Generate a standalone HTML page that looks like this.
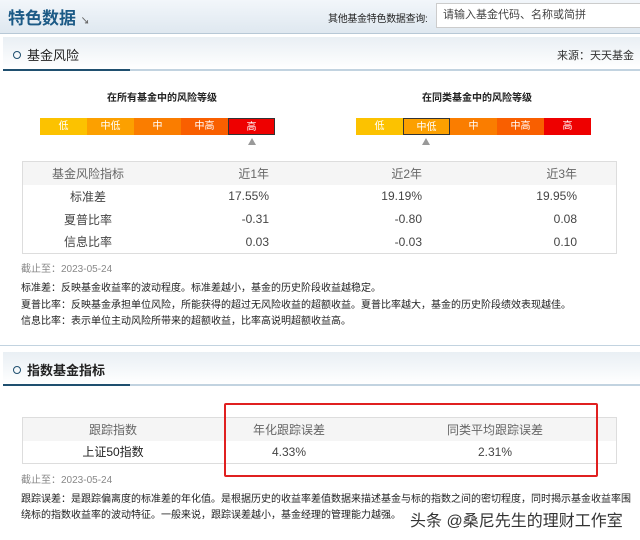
<html><head><style>
body{margin:0;width:640px;height:540px;background:#fff;font-family:"Liberation Sans","Noto Sans CJK SC",sans-serif;position:relative;overflow:hidden;color:#333}
.a{position:absolute;white-space:nowrap}
.bar{position:absolute;height:17px;display:flex}
.bar div{width:47px;text-align:center;font-size:10px;line-height:17px;color:#fff;box-sizing:border-box}
.tri{position:absolute;width:0;height:0;border-left:4px solid transparent;border-right:4px solid transparent;border-bottom:7px solid #999}
.sec{position:absolute;left:3px;right:0;height:32px;background:linear-gradient(#e9eff4,#fff);border-bottom:2px solid #c2d3e0}
.sec .u{position:absolute;left:0;bottom:-2px;width:127px;height:2px;background:#1f4f6f}
.sec .t{position:absolute;left:10px;top:8px;font-size:13px;color:#222}
.sec .t:before{content:"";display:inline-block;width:6px;height:6px;border:1.5px solid #1f4f6f;border-radius:50%;margin-right:6px;vertical-align:1px}
table{position:absolute;border-collapse:collapse;border:1px solid #ddd;font-size:12px;color:#444}
td{height:23px;padding:0}
.n{font-size:10px;color:#222}
</style></head><body>
<div class="a" style="left:0;top:0;width:640px;height:33px;background:linear-gradient(#f2f6fa,#dfe8f0);border-bottom:1px solid #b7c8d6"></div>
<div class="a" style="left:8px;top:4px;font-size:17px;font-weight:bold;color:#1c5a86">特色数据 <span style="font-size:9px;color:#666">↘</span></div>
<div class="a" style="left:328px;top:10px;font-size:10px;color:#222;letter-spacing:-0.3px">其他基金特色数据查询:</div>
<div class="a" style="left:436px;top:3px;width:210px;height:25px;background:#fff;border:1px solid #ccc;box-sizing:border-box;font-size:11px;line-height:23px;padding-left:6px;color:#444">请输入基金代码、名称或简拼</div>
<div class="sec" style="top:37px"><div class="u"></div><div class="t">基金风险</div><div class="a" style="right:6px;top:10px;font-size:11px;color:#333">来源：天天基金</div></div>
<div class="a" style="left:107px;top:89px;font-size:10px;font-weight:bold;color:#222">在所有基金中的风险等级</div>
<div class="a" style="left:422px;top:89px;font-size:10px;font-weight:bold;color:#222">在同类基金中的风险等级</div>
<div class="bar" style="left:40px;top:118px"><div style="background:#fcc200">低</div><div style="background:#fca000">中低</div><div style="background:#fa7d00">中</div><div style="background:#f95f00">中高</div><div style="background:#ee0000;border:1px solid #333">高</div></div>
<div class="bar" style="left:356px;top:118px"><div style="background:#fcc200">低</div><div style="background:#fca000;border:1px solid #333">中低</div><div style="background:#fa7d00">中</div><div style="background:#f95f00">中高</div><div style="background:#ee0000">高</div></div>
<div class="tri" style="left:248px;top:138px"></div>
<div class="tri" style="left:422px;top:138px"></div>
<table style="left:22px;top:161px;width:595px">
<tr style="background:#f5f5f5;color:#666"><td style="width:130px;text-align:center">基金风险指标</td><td style="text-align:right;width:116px">近1年</td><td style="text-align:right;width:153px">近2年</td><td style="text-align:right;width:155px">近3年</td><td></td></tr>
<tr><td style="text-align:center">标准差</td><td style="text-align:right">17.55%</td><td style="text-align:right">19.19%</td><td style="text-align:right">19.95%</td><td></td></tr>
<tr><td style="text-align:center">夏普比率</td><td style="text-align:right">-0.31</td><td style="text-align:right">-0.80</td><td style="text-align:right">0.08</td><td></td></tr>
<tr><td style="text-align:center">信息比率</td><td style="text-align:right">0.03</td><td style="text-align:right">-0.03</td><td style="text-align:right">0.10</td><td></td></tr>
</table>
<div class="a" style="left:21px;top:260px;font-size:10px;color:#888">截止至：2023-05-24</div>
<div class="a n" style="left:21px;top:279px">标准差：反映基金收益率的波动程度。标准差越小，基金的历史阶段收益越稳定。</div>
<div class="a n" style="left:21px;top:296px">夏普比率：反映基金承担单位风险，所能获得的超过无风险收益的超额收益。夏普比率越大，基金的历史阶段绩效表现越佳。</div>
<div class="a n" style="left:21px;top:312px">信息比率：表示单位主动风险所带来的超额收益，比率高说明超额收益高。</div>
<div class="a" style="left:0;top:345px;width:640px;height:1px;background:#c2d3e0"></div>
<div class="sec" style="top:352px"><div class="u"></div><div class="t" style="font-weight:bold">指数基金指标</div></div>
<table style="left:22px;top:417px;width:595px">
<tr style="background:#f5f5f5;color:#666"><td style="width:180px;text-align:center">跟踪指数</td><td style="text-align:center;width:172px">年化跟踪误差</td><td style="text-align:left;padding-left:72px">同类平均跟踪误差</td></tr>
<tr><td style="text-align:center;color:#222">上证50指数</td><td style="text-align:center">4.33%</td><td style="text-align:left;padding-left:103px">2.31%</td></tr>
</table>
<div class="a" style="left:224px;top:403px;width:370px;height:70px;border:2px solid #e02020;border-radius:2px"></div>
<div class="a" style="left:21px;top:471px;font-size:10px;color:#888">截止至：2023-05-24</div>
<div class="a n" style="left:21px;top:490px">跟踪误差：是跟踪偏离度的标准差的年化值。是根据历史的收益率差值数据来描述基金与标的指数之间的密切程度，同时揭示基金收益率围</div>
<div class="a n" style="left:21px;top:506px">绕标的指数收益率的波动特征。一般来说，跟踪误差越小，基金经理的管理能力越强。</div>
<div class="a" style="left:410px;top:507px;font-size:16px;color:#333;text-shadow:0 0 2px #fff,0 0 2px #fff,0 0 1px #fff">头条 @桑尼先生的理财工作室</div>
</body></html>
